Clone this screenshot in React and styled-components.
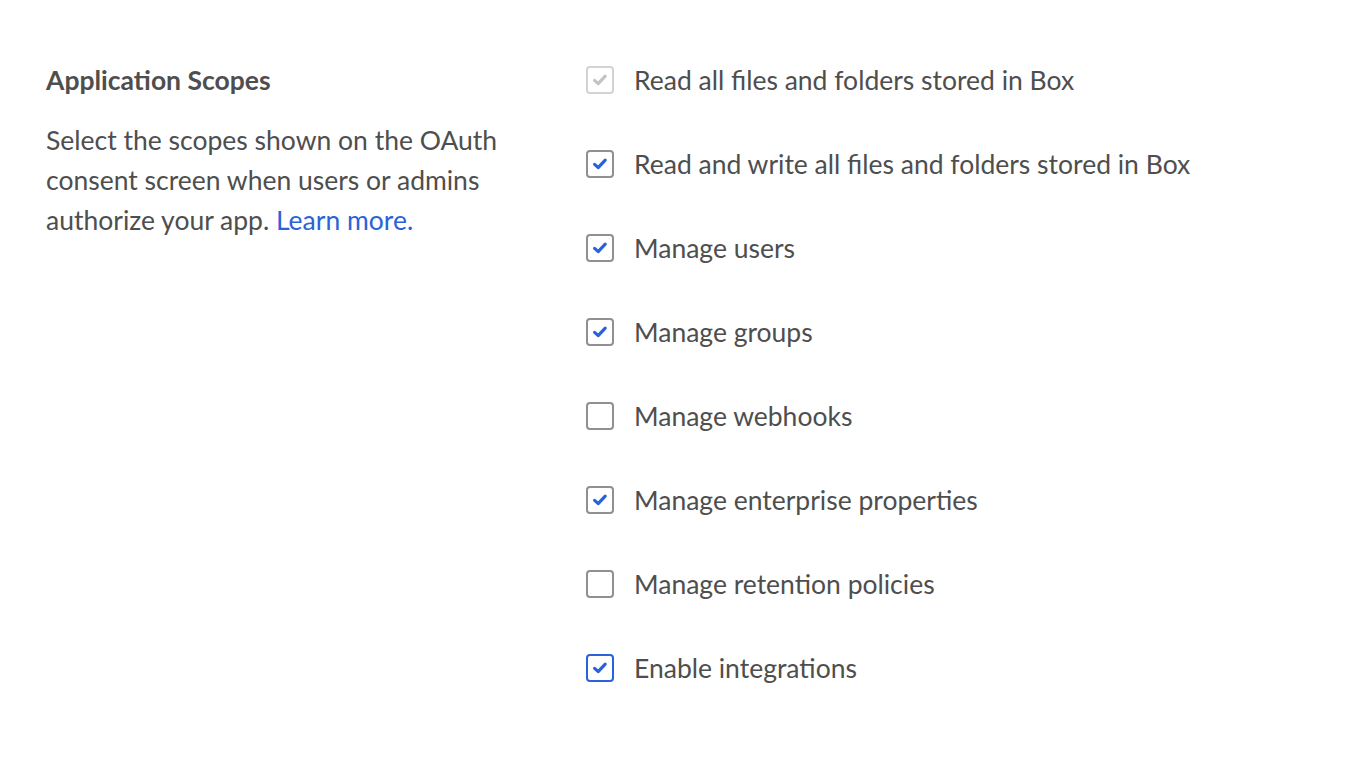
import React from 'react';
import styled, { createGlobalStyle } from 'styled-components';

const GlobalStyle = createGlobalStyle`
    body {
        margin: 0;
        background: #ffffff;
        font-family: Lato, "Open Sans", sans-serif;
        color: #4e4e4e;
    }
`;

const Page = styled.div`
    display: grid;
    grid-template-columns: 470px 1fr;
    column-gap: 70px;
    padding: 60px 46px;
`;

const Intro = styled.div`
    display: flex;
    flex-direction: column;
    gap: 20px;
`;

const Heading = styled.h2`
    margin: 0;
    font-size: 26.5px;
    line-height: 40px;
    font-weight: 700;
    color: #4e4e4e;
`;

const Description = styled.p`
    margin: 0;
    font-size: 26.5px;
    line-height: 40px;
    > a {
        color: #2a62d9;
        text-decoration: none;
    }
`;

const ScopeList = styled.div`
    display: flex;
    flex-direction: column;
    gap: 44px;
`;

const Row = styled.label`
    display: flex;
    align-items: center;
    gap: 20px;
    font-size: 26.5px;
    line-height: 40px;
    color: #4e4e4e;
`;

const borderFor = (state) => {
    if (state === 'disabled') return '#d3d3d3';
    if (state === 'focused') return '#2a62d9';
    return '#909090';
};

const Box = styled.span`
    width: 24px;
    height: 24px;
    flex-shrink: 0;
    border: 2px solid ${(p) => borderFor(p.$state)};
    border-radius: 4px;
    display: flex;
    align-items: center;
    justify-content: center;
    background: #fff;
    > svg {
        width: 18px;
        height: 18px;
    }
`;

const Check = ({ color }) => (
    <svg viewBox="0 0 18 18">
        <path d="M3.6 9.4 L7.2 12.6 L14.2 5.2" fill="none" stroke={color} strokeWidth="3.2" strokeLinecap="round" strokeLinejoin="round" />
    </svg>
);

const scopes = [
    { label: 'Read all files and folders stored in Box', checked: true, state: 'disabled' },
    { label: 'Read and write all files and folders stored in Box', checked: true },
    { label: 'Manage users', checked: true },
    { label: 'Manage groups', checked: true },
    { label: 'Manage webhooks', checked: false },
    { label: 'Manage enterprise properties', checked: true },
    { label: 'Manage retention policies', checked: false },
    { label: 'Enable integrations', checked: true, state: 'focused' },
];

export default function App() {
    return (
        <>
            <GlobalStyle />
            <Page>
                <Intro>
                    <Heading>Application Scopes</Heading>
                    <Description>
                        Select the scopes shown on the OAuth consent screen when users or admins authorize your app. <a href="#">Learn more.</a>
                    </Description>
                </Intro>
                <ScopeList>
                    {scopes.map((s) => (
                        <Row key={s.label}>
                            <Box $state={s.state}>
                                {s.checked && <Check color={s.state === 'disabled' ? '#c4c4c4' : '#2a62d9'} />}
                            </Box>
                            {s.label}
                        </Row>
                    ))}
                </ScopeList>
            </Page>
        </>
    );
}
